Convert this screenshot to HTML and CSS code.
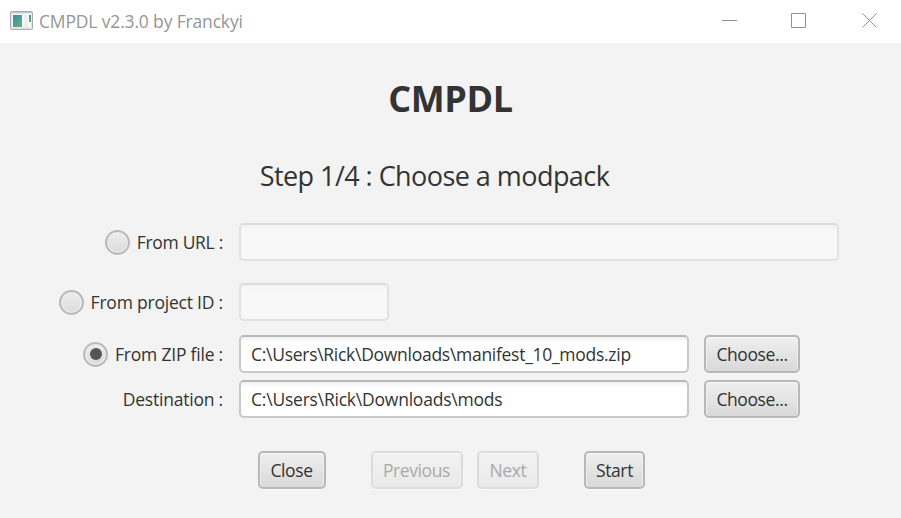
FILE: index.html
```html
<!DOCTYPE html>
<html lang="en">
<head>
<meta charset="utf-8">
<title>CMPDL v2.3.0 by Franckyi</title>
<link rel="stylesheet" href="styles.css">
</head>
<body>
<header class="titlebar">
  <svg class="app-icon" width="24" height="20" viewBox="0 0 24 20">
    <defs><linearGradient id="pane" x1="0" y1="0" x2="1" y2="1"><stop offset="0" stop-color="#4684b0"/><stop offset="1" stop-color="#62b878"/></linearGradient></defs>
    <rect x=".5" y=".5" width="22" height="18" rx="1" fill="#e3e6e9" stroke="#a6abb1"/>
    <path d="M1 1.5h21" stroke="#c2c8cf"/>
    <rect x="2" y="3" width="19" height="13" fill="#fafafa"/>
    <rect x="3" y="4" width="9" height="12" fill="url(#pane)"/>
    <path d="M14 4h4v7h-4zM14 12h4v4h-4z" fill="#eeeeec"/>
    <rect x="19" y="4" width="2" height="7" fill="url(#pane)"/>
  </svg>
  <span class="caption">CMPDL v2.3.0 by Franckyi</span>
  <svg class="controls" width="156" height="16" viewBox="0 0 156 16" fill="none" stroke="#929292">
    <path d="M0 7.500h15M69.500 .5h14v14h-14z"/>
    <path d="M140.500 .5l14 14M154.500 .5l-14 14"/>
  </svg>
</header>
<main>
  <h1>CMPDL</h1>
  <h2>Step 1/4 : Choose a modpack</h2>
  <form class="form">
    <label class="row"><i class="radio"></i><span class="label-url">From URL :</span></label>
    <div class="field wide disabled"></div>
    <label class="row"><i class="radio"></i><span>From project ID :</span></label>
    <div class="field short disabled"></div>
    <label class="row"><i class="radio checked"></i><span>From ZIP file :</span></label>
    <div class="field path">C:\Users\Rick\Downloads\manifest_10_mods.zip</div>
    <button type="button" class="btn">Choose...</button>
    <label class="row"><span>Destination :</span></label>
    <div class="field">C:\Users\Rick\Downloads\mods</div>
    <button type="button" class="btn">Choose...</button>
  </form>
  <footer class="actions">
    <button type="button" class="btn close">Close</button>
    <button type="button" class="btn previous" disabled>Previous</button>
    <button type="button" class="btn next" disabled>Next</button>
    <button type="button" class="btn start">Start</button>
  </footer>
</main>
</body>
</html>
```
FILE: styles.css
```css
* { box-sizing: border-box; }
body {
  margin: 0;
  height: 518px;
  overflow: hidden;
  background: #f3f3f3;
  color: #333;
  font: 17.5px/24px "Open Sans", "Noto Sans", sans-serif;
  letter-spacing: -0.4px;
}
.titlebar {
  display: flex;
  align-items: center;
  height: 43px;
  padding: 0 23px 2px 10px;
  background: #fff;
  color: #969696;
}
.app-icon { margin-right: 5px; }
.caption { white-space: nowrap; letter-spacing: -0.16px; }
.controls { margin-left: auto; }
h1, h2 { margin: 0; text-align: center; white-space: nowrap; }
h1 {
  height: 112px;
  padding-top: 32px;
  font-size: 36px;
  line-height: 48px;
  letter-spacing: -0.4px;
}
h2 {
  height: 68px;
  padding: 3px 32px 0 0;
  font-size: 27px;
  line-height: 36px;
  font-weight: 400;
  letter-spacing: -0.55px;
}
.form {
  display: grid;
  grid-template-columns: 224px 450px 96px;
  grid-template-rows: 53px 45px 38px 38px;
  column-gap: 15px;
  row-gap: 7px;
}
.row {
  grid-column: 1;
  display: flex;
  align-items: center;
  justify-content: flex-end;
  height: 38px;
  gap: 7px;
  padding-right: 1px;
  letter-spacing: -0.21px;
  white-space: nowrap;
}
.label-url { letter-spacing: -0.3px; }
.radio {
  display: grid;
  place-items: center;
  width: 25px;
  height: 25px;
  border: 2px solid #bababa;
  border-radius: 50%;
  background: linear-gradient(#eee, #dbdbdb);
  box-shadow: inset 0 0 0 1px #f1f1f1, 0 1px #f9f9f9;
}
.checked::after {
  content: "";
  width: 12px;
  height: 12px;
  border-radius: 50%;
  background: #555;
}
.field {
  grid-column: 2;
  display: flex;
  align-items: center;
  height: 38px;
  padding: 0 10px;
  border: 2px solid #c9c9c9;
  border-top-color: #b8b8b8;
  border-radius: 5px;
  background: linear-gradient(#f1f1f1, #fff 6px);
  letter-spacing: -0.22px;
  white-space: nowrap;
}
.path { letter-spacing: -0.28px; }
.disabled {
  border-color: #e2e2e2;
  border-top-color: #dcdcdc;
  background: linear-gradient(#f2f2f2, #f8f8f8 6px);
}
.wide { grid-column: 2 / 4; width: 600px; }
.short { width: 150px; }
.btn {
  height: 38px;
  padding: 0;
  border: 2px solid #b8b8b8;
  border-radius: 5px;
  background: linear-gradient(#efefef, #d9d9d9);
  box-shadow: inset 0 1px #fafafa, inset 1px 0 #eee, inset -1px 0 #eee, 0 1px #fafafa;
  color: #333;
  font: inherit;
  letter-spacing: -0.4px;
  white-space: nowrap;
}
.btn:disabled {
  border-color: #dcdcdc;
  background: linear-gradient(#f2f2f2, #e9e9e9);
  color: #aaa;
}
.actions { display: flex; padding: 33px 0 0 258px; }
.close { width: 68px; margin-right: 45px; }
.previous { width: 92px; margin-right: 14px; }
.next { width: 62px; margin-right: 45px; }
.start { width: 61px; }
.close, .previous { padding-right: 1px; }
```
